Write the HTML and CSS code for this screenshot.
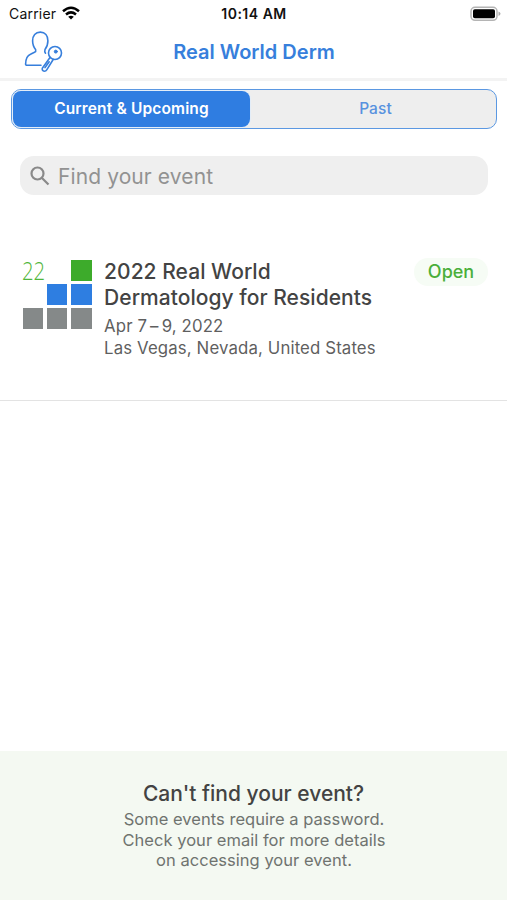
FILE: index.html
```html
<!DOCTYPE html>
<html lang="en">
<head>
<meta charset="utf-8">
<title>Real World Derm</title>
<link rel="stylesheet" href="styles.css">
</head>
<body>
<div class="app">
  <div class="status">
    <div class="status-left">
      <span class="carrier">Carrier</span>
      <svg class="wifi" width="18" height="14" viewBox="0 0 18 14" fill="none" stroke="#000" stroke-width="2.5">
        <path d="M1 5.2Q9-1.8 17 5.2"/>
        <path d="M4 8.5Q9 4.3 14 8.5"/>
        <path d="M9 13.6L6.2 10.8Q9 8.8 11.8 10.8Z" fill="#000" stroke="none"/>
      </svg>
    </div>
    <span class="clock">10:14 AM</span>
    <div class="status-right">
      <svg width="31" height="16" viewBox="0 0 31 16">
        <rect x="1" y="1.3" width="26" height="13" rx="4" fill="#fff" stroke="#b4b4b4" stroke-width="1.5"/>
        <rect x="3" y="3.3" width="22" height="9" rx="1.8" fill="#000"/>
        <path d="M28.5 5.5Q30.5 6.3 30.5 7.8T28.5 10.1Z" fill="#aaa"/>
      </svg>
    </div>
  </div>
  <header class="nav">
    <svg class="profile" width="40" height="42" viewBox="0 0 40 42" fill="none" stroke="#377fdc" stroke-width="1.6" stroke-linecap="round" stroke-linejoin="round">
      <path d="M17 35.3H3Q1.600 35.300 1.600 34Q1.800 26 6.500 24.200L10.500 22.300Q12.200 21.400 11.700 19.700C9.300 17 8.600 14 8.600 10.800C8.600 5.500 11.500 2.100 16.300 2.100S23.900 5.500 23.900 10.800C23.900 14 23 17 21 19.500Q20.300 21.700 21.500 23.200"/>
      <circle cx="31" cy="23" r="6.500"/>
      <circle cx="31.800" cy="21.600" r="1.500" fill="#377fdc" stroke-width="1"/>
      <path d="M26 27.500L18.300 38.200Q17.800 40.800 20.300 41.200Q22 41.200 22.900 39.600L29.200 29.500M25.200 31.800L21 37.600"/>
    </svg>
    <h1 class="nav-title">Real World Derm</h1>
  </header>
  <main class="content">
    <div class="tabs">
      <div class="tab active"><span>Current &amp; Upcoming</span></div>
      <div class="tab"><span>Past</span></div>
    </div>
    <div class="search">
      <svg width="20" height="20" viewBox="0 0 20 20" fill="none" stroke="#898989" stroke-width="2.200"><circle cx="7.500" cy="7.500" r="6"/><path d="M12 12L18.500 18.500"/></svg>
      <span class="placeholder">Find your event</span>
    </div>
    <article class="event">
      <div class="logo">
        <span class="year">22</span><i class="empty"></i><i class="green"></i>
        <i class="empty"></i><i class="blue"></i><i class="blue"></i>
        <i class="gray"></i><i class="gray"></i><i class="gray"></i>
      </div>
      <div class="details">
        <h2>2022 Real World<br>Dermatology for Residents</h2>
        <p class="date">Apr 7<span class="dash">–</span>9, 2022</p>
        <p class="place">Las Vegas, Nevada, United States</p>
      </div>
      <span class="badge">Open</span>
    </article>
  </main>
  <footer class="help">
    <h3>Can't find your event?</h3>
    <p>Some events require a password.<br>Check your email for more details<br>on accessing your event.</p>
  </footer>
</div>
</body>
</html>
```
FILE: styles.css
```css
* { box-sizing: border-box; }
body { margin: 0; background: #fff; font-family: Inter, "Liberation Sans", sans-serif; color: #434343; }
h1, h2, h3, p { margin: 0; font-weight: 500; }
svg { display: block; flex: none; }
span { white-space: nowrap; }
.app { width: 507px; height: 900px; display: flex; flex-direction: column; overflow: hidden; }
.status { height: 27px; display: grid; grid-template-columns: 1fr auto 1fr; align-items: center; padding: 0 6px 0 8px; color: #111; }
.status-left { display: flex; align-items: center; gap: 6px; font-size: 14px; letter-spacing: 0.2px; }
.carrier { padding-left: 1px; }
.wifi { margin-top: -2px; }
.clock { font-size: 14px; font-weight: 600; letter-spacing: 0.5px; margin-right: 1px; }
.status-right { display: flex; justify-content: flex-end; }
.nav { height: 54px; display: grid; grid-template-columns: 40px 1fr 40px; padding: 3px 24px 0; border-bottom: 3px solid #f3f3f3; }
.nav-title { text-align: center; font-size: 20px; line-height: 44px; font-weight: 600; color: #377fdc; padding-left: 1px; }
.content { flex: 1; }
.tabs { display: flex; height: 40px; margin: 8px 10px 0 11px; padding: 1px; border: 1.5px solid #5b98e2; border-radius: 10px; background: #eee; }
.tab { flex: 1; display: flex; align-items: center; justify-content: center; padding: 0 0 2px 6px; font-size: 15.500px; font-weight: 500; letter-spacing: 0.1px; color: #5792df; border-radius: 8px; }
.tab.active { flex: 0 0 237px; padding: 0 0 2px; background: #2f7de1; color: #fff; font-weight: 600; letter-spacing: 0.15px; box-shadow: 0 0 0 1px #e3edf8; }
.search { height: 39px; margin: 27px 19px 0 20px; padding: 0 10px; display: flex; align-items: center; gap: 8px; border-radius: 14px; background: #efefef; font-size: 21px; letter-spacing: 0.1px; color: #929292; }
.placeholder { padding-top: 1px; }
.event { height: 206px; border-bottom: 1px solid #e3e3e3; padding: 63px 19px 0 22px; display: flex; align-items: flex-start; }
.logo { display: grid; grid-template-columns: repeat(3, 20.700px); grid-auto-rows: 20.500px; gap: 3.500px; margin-top: 2px; padding-left: 0.500px; flex: none; }
.year { font-family: "Open Sans", sans-serif; font-size: 26px; line-height: 20px; color: #50b63b; font-weight: 300; transform: scaleX(.78); transform-origin: left; margin-left: -1px; }
.green { background: #3dab2b; }
.blue { background: #2e7ee1; }
.gray { background: #858989; }
.details { margin: 1px 0 0 12.500px; flex: 1; min-width: 0; }
h2 { font-size: 21px; line-height: 26px; letter-spacing: 0.04px; }
.date, .place { font-size: 16.800px; line-height: 22px; font-weight: 400; color: #5f5f5f; letter-spacing: 0.130px; }
.date { margin-top: 4px; }
.dash { margin: 0 3px; }
.badge { height: 28px; width: 74px; border-radius: 14px; background: #f6fcf5; color: #4aaf3a; display: flex; align-items: center; justify-content: center; padding-bottom: 1px; font-size: 18px; font-weight: 500; }
.help { height: 149px; background: #f4f9f2; padding: 29px 0 0; text-align: center; }
.help h3 { font-size: 21px; line-height: 28px; }
.help p { margin-top: 1px; padding-left: 1px; font-size: 16.500px; line-height: 20.500px; font-weight: 400; color: #6f736f; letter-spacing: 0.03px; }
```
